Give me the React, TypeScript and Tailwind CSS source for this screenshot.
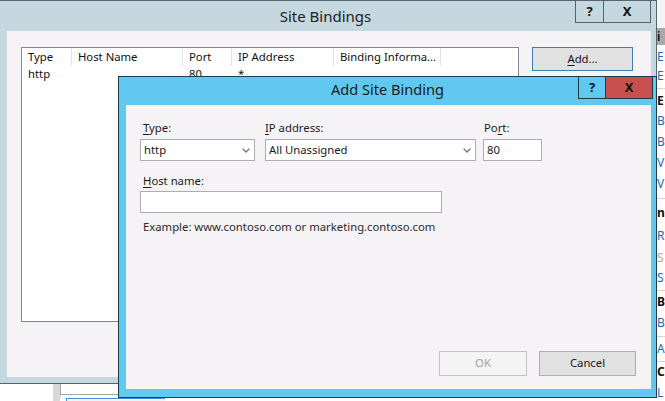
import React from 'react';

const Chevron = () => (
  <svg width="8" height="5" viewBox="0 0 8 5" className="shrink-0">
    <path d="M0.6 0.6 L4 4 L7.4 0.6" fill="none" stroke="#707070" strokeWidth="1.3" />
  </svg>
);

// the IIS actions pane behind the dialogs: only the first letter shows at the right edge
type ActionItem = { text: string; h: number; kind: 'link' | 'head' | 'gray' | 'sep' };

const actions: ActionItem[] = [
  { text: 'E', h: 20, kind: 'link' },
  { text: 'E', h: 18, kind: 'link' },
  { text: '', h: 6, kind: 'sep' },
  { text: 'E', h: 19, kind: 'head' },
  { text: 'B', h: 22, kind: 'link' },
  { text: 'B', h: 20, kind: 'link' },
  { text: 'V', h: 22, kind: 'link' },
  { text: 'V', h: 20, kind: 'link' },
  { text: '', h: 8, kind: 'sep' },
  { text: 'n', h: 22, kind: 'head' },
  { text: 'R', h: 24, kind: 'link' },
  { text: 'S', h: 20, kind: 'gray' },
  { text: 'S', h: 20, kind: 'link' },
  { text: '', h: 4, kind: 'sep' },
  { text: 'B', h: 20, kind: 'head' },
  { text: 'B', h: 22, kind: 'link' },
  { text: '', h: 4, kind: 'sep' },
  { text: 'A', h: 22, kind: 'link' },
  { text: '', h: 2, kind: 'sep' },
  { text: 'C', h: 20, kind: 'head' },
  { text: 'L', h: 22, kind: 'link' },
];

const ActionsPane = () => (
  <div className="absolute left-[657px] top-0 flex w-[8px] flex-col bg-white text-[12px]">
    <div className="h-[28px] bg-[#f3f3f3]" />
    <div className="flex h-[17px] items-center bg-[#a9a9a9] font-semibold text-[#111]">i</div>
    <div className="h-[2px]" />
    {actions.map((a, i) =>
      a.kind === 'sep' ? (
        <div key={i} className="flex flex-col justify-center" style={{ height: a.h }}>
          <div className="h-px bg-[#d4d4d4]" />
        </div>
      ) : (
        <div
          key={i}
          className={
            'flex items-center whitespace-nowrap ' +
            (a.kind === 'head'
              ? 'font-bold text-[#111]'
              : a.kind === 'gray'
                ? 'text-[#a8a8a8]'
                : 'text-[#1b6ab5]')
          }
          style={{ height: a.h }}
        >
          {a.text}
        </div>
      ),
    )}
  </div>
);

const columns = [
  { label: 'Type', w: 'w-[50px]', row: 'http' },
  { label: 'Host Name', w: 'w-[111px]', row: '' },
  { label: 'Port', w: 'w-[49px]', row: '80' },
  { label: 'IP Address', w: 'w-[102px]', row: '*' },
  { label: 'Binding Informa...', w: 'w-[107px]', row: '' },
];

const SiteBindings = () => (
  <div className="absolute left-0 top-0 flex h-[384px] w-[657px] flex-col border-y border-r border-[#56656d] bg-[#c5d7df]">
    <div className="relative flex h-[30px] shrink-0 items-center justify-center pr-[5px] text-[15px] text-[#222]">
      Site Bindings
      <div className="absolute right-[5px] top-[-1px] flex h-[23px] text-[13px] font-bold text-[#111]">
        <div className="flex w-[29px] items-center justify-center border border-[#56656d]">?</div>
        <div className="flex w-[47px] items-center justify-center border border-l-0 border-[#56656d]">X</div>
      </div>
    </div>
    <div className="mb-[6px] ml-[7px] mr-[5px] flex flex-1 items-start gap-[13px] bg-[#f5f3f6] pl-[14px] pt-[16px] text-[11.3px] text-[#111]">
      <div className="flex h-[275px] w-[498px] flex-col border border-[#828790] bg-white">
        <div className="flex h-[18px]">
          {columns.map((c) => (
            <div key={c.label} className={`${c.w} flex items-center border-r border-[#e3e3e3] pl-[6px]`}>
              {c.label}
            </div>
          ))}
        </div>
        <div className="flex h-[17px]">
          {columns.map((c) => (
            <div key={c.label} className={`${c.w} flex items-center pl-[6px] pr-px`}>
              {c.row}
            </div>
          ))}
        </div>
      </div>
      <div className="flex h-[24px] w-[101px] items-center justify-center border border-[#3c7fb1] bg-[#e1e1e1]">
        <span className="underline underline-offset-2">A</span>dd...
      </div>
    </div>
  </div>
);

const Field = ({ children, className = '' }: { children?: React.ReactNode; className?: string }) => (
  <div className={`flex h-[22px] items-center border border-[#abadb3] bg-white ${className}`}>{children}</div>
);

const AddSiteBinding = () => (
  <div className="absolute left-[118px] top-[76px] flex h-[322px] w-[539px] flex-col border border-[#1f3c4c] bg-[#61c9ef]">
    <div className="relative flex h-[28px] shrink-0 items-center justify-center pb-[2px] text-[14.6px] text-[#1a1a1a]">
      Add Site Binding
      <div className="absolute right-[3px] top-[-1px] flex h-[23px] text-[13px] font-bold text-[#111]">
        <div className="flex w-[28px] items-center justify-center border border-[#1f3c4c]">?</div>
        <div className="flex w-[47px] items-center justify-center border border-l-0 border-[#1f3c4c] bg-[#c7504f]">
          X
        </div>
      </div>
    </div>
    <div className="mb-[8px] ml-[7px] mr-[5px] flex flex-1 flex-col bg-[#f5f3f6] pb-[13px] pl-[14px] pr-[15px] pt-[15px] text-[11.3px] text-[#1a1a1a]">
      <div className="flex items-start">
        <div className="flex w-[115px] flex-col gap-[3px]">
          <div className="pl-[3px] leading-[16px]">
            <span className="underline underline-offset-2">T</span>ype:
          </div>
          <Field className="justify-between pl-[3px] pr-[4px]">
            <span>http</span>
            <Chevron />
          </Field>
        </div>
        <div className="ml-[10px] flex w-[211px] flex-col gap-[3px]">
          <div className="leading-[16px]">
            <span className="underline underline-offset-2">I</span>P address:
          </div>
          <Field className="justify-between pl-[3px] pr-[4px]">
            <span>All Unassigned</span>
            <Chevron />
          </Field>
        </div>
        <div className="ml-[7px] flex w-[59px] flex-col gap-[3px]">
          <div className="pl-px leading-[16px]">
            Po<span className="underline underline-offset-2">r</span>t:
          </div>
          <Field className="pl-[3px]">80</Field>
        </div>
      </div>
      <div className="mt-[12px] pl-[3px] leading-[16px]">
        <span className="underline underline-offset-2">H</span>ost name:
      </div>
      <Field className="mt-[2px] w-[302px]" />
      <div className="mt-[6px] pl-[3px] leading-[16px] text-[#2a2a2a]">
        Example: www.contoso.com or marketing.contoso.com
      </div>
      <div className="flex-1" />
      <div className="flex justify-end gap-[12px]">
        <div className="flex h-[25px] w-[88px] items-center justify-center border border-[#c2c2c2] bg-[#f4f4f4] text-[#a3a3a3]">
          OK
        </div>
        <div className="flex h-[25px] w-[97px] items-center justify-center border border-[#adadad] bg-[#e1e1e1]">
          Cancel
        </div>
      </div>
    </div>
  </div>
);

const Backdrop = () => (
  <div className="absolute left-0 top-[384px] flex h-[17px] w-[657px] bg-white">
    <div className="w-[53px]" />
    <div className="w-[7px] bg-[#d8d8d8]" />
    <div className="flex flex-1 flex-col">
      <div className="h-[11px] border-b border-l border-[#a6a6a6] bg-white" />
      <div className="h-[3px] border-l border-[#d8d8d8]" />
      <div className="ml-[6px] h-[3px] w-[99px] border-l border-t border-[#4a8fdc] bg-[#eef5fc]" />
    </div>
  </div>
);

export default function App() {
  return (
    <div className="relative h-[401px] w-[665px] overflow-hidden bg-white font-['Noto_Sans',sans-serif]">
      <ActionsPane />
      <Backdrop />
      <SiteBindings />
      <AddSiteBinding />
    </div>
  );
}
